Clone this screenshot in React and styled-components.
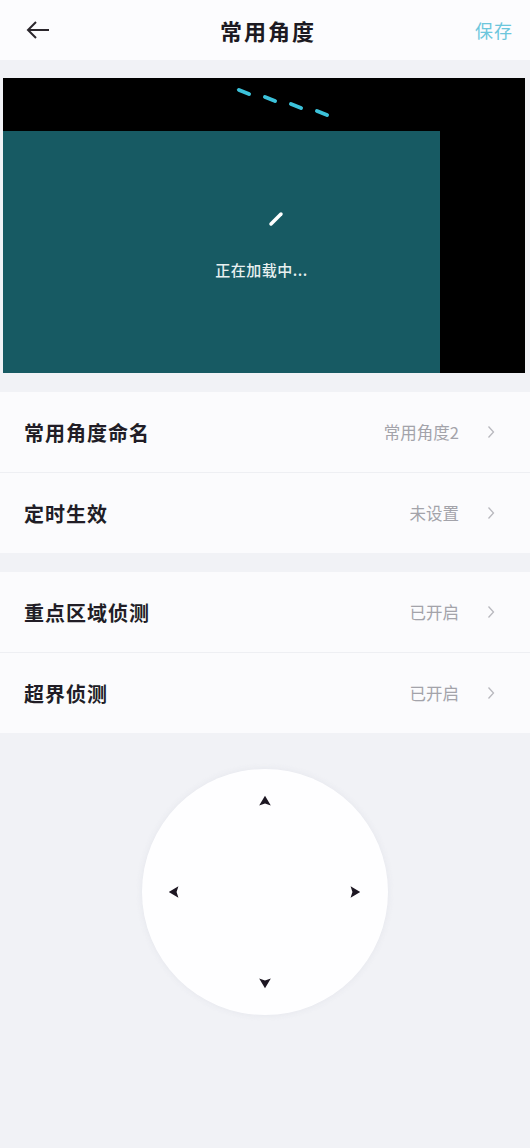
import React from "react";
import styled, { createGlobalStyle } from "styled-components";

const GlobalStyle = createGlobalStyle`
  html, body {
    margin: 0;
    padding: 0;
    background: #f1f2f6;
    font-family: "Noto Sans CJK SC", "Noto Sans", sans-serif;
  }
`;

const Page = styled.div`
  width: 530px;
  min-height: 1148px;
  background: #f1f2f6;
  display: flex;
  flex-direction: column;
`;

const Header = styled.div`
  height: 60px;
  background: #fcfcfe;
  display: grid;
  grid-template-columns: 80px 1fr 80px;
  align-items: center;
  margin-bottom: 18px;
`;

const BackBtn = styled.div`
  padding-left: 25px;
  display: flex;
  align-items: center;
`;

const Title = styled.div`
  text-align: center;
  font-size: 22px;
  font-weight: 700;
  color: #1c1a22;
  letter-spacing: 2px;
  padding-left: 6px;
`;

const SaveBtn = styled.div`
  text-align: right;
  padding-right: 17px;
  font-size: 18px;
  color: #6cc6dc;
  letter-spacing: 1px;
`;

const Video = styled.div`
  margin: 0 5px 0 3px;
  height: 295px;
  background: #000;
  display: flex;
  flex-direction: column;
  justify-content: flex-end;
  position: relative;
`;

const Dashes = styled.svg`
  position: absolute;
  left: 230px;
  top: 6px;
`;

const Stage = styled.div`
  width: 437px;
  height: 242px;
  background: #175a63;
  display: flex;
  flex-direction: column;
  align-items: center;
  padding-top: 78px;
  box-sizing: border-box;
`;

const Spinner = styled.svg`
  margin-left: 108px;
`;

const LoadingText = styled.div`
  margin-top: 30px;
  margin-left: 80px;
  font-size: 15px;
  font-weight: 500;
  color: #e8f0f0;
  letter-spacing: 0.5px;
`;

const Card = styled.div`
  background: #fbfbfd;
  margin-top: ${(p) => p.$gap}px;
`;

const Row = styled.div`
  height: 80px;
  display: flex;
  align-items: center;
  padding: 0 35px 0 24px;
  border-top: ${(p) => (p.$first ? "none" : "1px solid #eeeff3")};
`;

const Label = styled.div`
  flex: 1;
  font-size: 20px;
  font-weight: 700;
  color: #211d26;
  letter-spacing: 1px;
`;

const Value = styled.div`
  font-size: 16.5px;
  color: #a3a3aa;
  margin-right: 28px;
`;

const Chevron = styled.svg`
  display: block;
`;

const PadArea = styled.div`
  flex: 1;
  display: flex;
  justify-content: center;
  padding-top: 36px;
`;

const Pad = styled.div`
  width: 246px;
  height: 246px;
  border-radius: 50%;
  background: #fefeff;
  box-shadow: 0 0 6px rgba(220, 222, 230, 0.6);
  display: grid;
  grid-template-columns: 1fr 1fr 1fr;
  grid-template-rows: 1fr 1fr 1fr;
  padding: 25px 26px 25px 25px;
  box-sizing: border-box;
`;

const Cell = styled.div`
  display: flex;
  align-items: ${(p) => p.$v || "center"};
  justify-content: ${(p) => p.$h || "center"};
`;

function Arrow({ dir }) {
  const rot = { up: 0, right: 90, down: 180, left: 270 }[dir];
  return (
    <svg width="14" height="14" viewBox="0 0 12 12" style={{ transform: `rotate(${rot}deg)` }}>
      <path d="M6 1.5 L11 9.8 L6 8.2 L1 9.8 Z" fill="#1d1722" />
    </svg>
  );
}

function ChevronIcon() {
  return (
    <Chevron width="8" height="14" viewBox="0 0 8 14">
      <path d="M1.5 1.5 L6.5 7 L1.5 12.5" fill="none" stroke="#b8b8be" strokeWidth="1.3" />
    </Chevron>
  );
}

const groups = [
  [
    ["常用角度命名", "常用角度2"],
    ["定时生效", "未设置"],
  ],
  [
    ["重点区域侦测", "已开启"],
    ["超界侦测", "已开启"],
  ],
];

export default function App() {
  return (
    <Page>
      <GlobalStyle />
      <Header>
        <BackBtn>
          <svg width="26" height="20" viewBox="0 0 26 20">
            <path d="M24 10 H3 M11 2 L3 10 L11 18" fill="none" stroke="#2a262c" strokeWidth="2" />
          </svg>
        </BackBtn>
        <Title>常用角度</Title>
        <SaveBtn>保存</SaveBtn>
      </Header>

      <Video>
        <Dashes width="110" height="40" viewBox="0 0 110 40">
          {[0, 1, 2, 3].map((i) => (
            <line
              key={i}
              x1={6 + i * 26}
              y1={6 + i * 7}
              x2={16 + i * 26}
              y2={10 + i * 7}
              stroke="#3cc2da"
              strokeWidth="4"
              strokeLinecap="round"
            />
          ))}
        </Dashes>
        <Stage>
          <Spinner width="20" height="20" viewBox="0 0 20 20">
            <path d="M5 15 L15 5" stroke="#fff" strokeWidth="3.5" strokeLinecap="round" />
          </Spinner>
          <LoadingText>正在加载中...</LoadingText>
        </Stage>
      </Video>

      {groups.map((rows, gi) => (
        <Card key={gi} $gap={19}>
          {rows.map(([label, value], ri) => (
            <Row key={label} $first={ri === 0}>
              <Label>{label}</Label>
              <Value>{value}</Value>
              <ChevronIcon />
            </Row>
          ))}
        </Card>
      ))}

      <PadArea>
        <Pad>
          <Cell />
          <Cell $v="flex-start">
            <Arrow dir="up" />
          </Cell>
          <Cell />
          <Cell $h="flex-start">
            <Arrow dir="left" />
          </Cell>
          <Cell />
          <Cell $h="flex-end">
            <Arrow dir="right" />
          </Cell>
          <Cell />
          <Cell $v="flex-end">
            <Arrow dir="down" />
          </Cell>
          <Cell />
        </Pad>
      </PadArea>
    </Page>
  );
}
